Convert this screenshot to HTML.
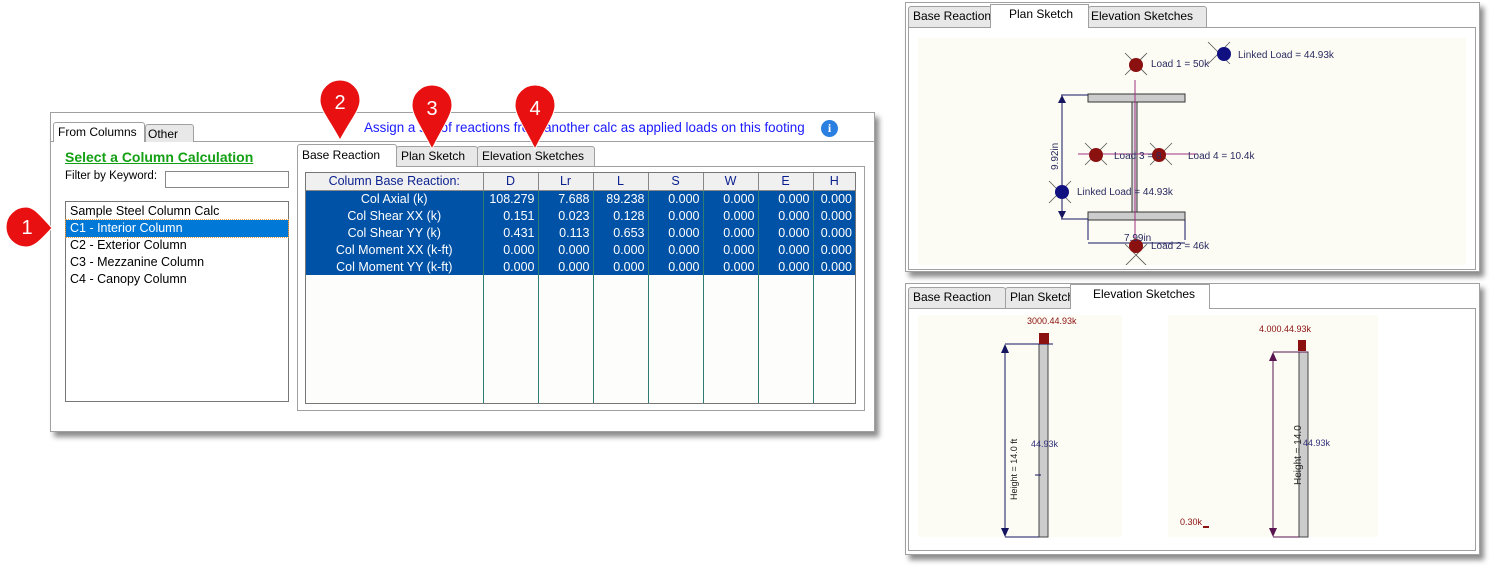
<!DOCTYPE html>
<html><head><meta charset="utf-8"><style>
*{box-sizing:border-box;margin:0;padding:0}
body{width:1495px;height:571px;background:#fff;position:relative;overflow:hidden;font-family:"Liberation Sans","DejaVu Sans",sans-serif;font-size:12px;color:#000}
.a{position:absolute}
.win{border:1px solid #a0a0a0;background:#fff;box-shadow:4px 5px 5px rgba(0,0,0,.45)}
.tab{position:absolute;border:1px solid #a0a0a0;border-bottom:none;background:#e8e8e8;border-radius:3px 3px 0 0;font-size:12px;padding-left:4px;line-height:18px;white-space:nowrap;overflow:hidden}
.tab.on{background:#fff;z-index:2}
table{border-collapse:collapse;font-size:12.5px}
td{height:17px;padding:0 3px;text-align:right;border-left:1px solid #2e7d75;color:#fff;line-height:16px}
th{font-weight:normal;color:#0a1f8f;background:#f0f0f0;height:17px;border-left:1px solid #888;border-bottom:1px solid #888;text-align:center}
td.l{text-align:center;border-left:none}
tr.s td{background:#0052a6}
.lst div{height:17px;line-height:17px;padding-left:4px;font-size:12.5px}
</style></head><body>

<div class="a win" style="left:50px;top:112px;width:825px;height:320px"></div>
<div class="a" style="left:51px;top:141px;width:823px;height:1px;background:#a0a0a0"></div>
<div class="tab" style="left:53px;top:122px;width:92px;height:20px;background:#fff;z-index:2">From Columns</div>
<div class="tab" style="left:145px;top:124px;width:49px;height:18px;padding-left:2px">Other</div>
<div class="a" style="left:364px;top:120px;color:#1a1aff;font-size:13.4px;white-space:nowrap">Assign a set of reactions from another calc as applied loads on this footing</div>
<div class="a" style="left:821px;top:120px;width:17px;height:17px;border-radius:50%;background:#2a7fe0;color:#fff;font-weight:bold;font-size:12px;text-align:center;line-height:17px;font-family:'Liberation Serif',serif">i</div>

<div class="a" style="left:65px;top:149px;color:#14a014;font-weight:bold;font-size:14px;text-decoration:underline">Select a Column Calculation</div>
<div class="a" style="left:65px;top:170px;font-size:11.5px">Filter by Keyword:</div>
<div class="a" style="left:165px;top:171px;width:124px;height:17px;border:1px solid #888"></div>
<div class="a lst" style="left:65px;top:201px;width:224px;height:201px;border:1px solid #777;padding-top:1px">
<div>Sample Steel Column Calc</div>
<div style="background:#0078d7;color:#fff;outline:1px dotted #f0a040">C1 - Interior Column</div>
<div>C2 - Exterior Column</div>
<div>C3 - Mezzanine Column</div>
<div>C4 - Canopy Column</div>
</div>

<div class="a" style="left:297px;top:166px;width:568px;height:245px;border:1px solid #a0a0a0"></div>
<div class="tab on" style="left:297px;top:144px;width:100px;height:23px;padding-top:1px">Base Reaction</div>
<div class="tab" style="left:396px;top:146px;width:82px;height:20px">Plan Sketch</div>
<div class="tab" style="left:477px;top:146px;width:118px;height:20px">Elevation Sketches</div>

<div class="a" style="left:305px;top:172px;width:551px;height:232px;border:1px solid #777;background:#fdfdfb">
<table style="width:549px">
<tr><th style="width:177px;border-left:none">Column Base Reaction:</th><th style="width:55px">D</th><th style="width:55px">Lr</th><th style="width:55px">L</th><th style="width:55px">S</th><th style="width:55px">W</th><th style="width:55px">E</th><th>H</th></tr>
<tr class="s"><td class="l">Col Axial (k)</td><td>108.279</td><td>7.688</td><td>89.238</td><td>0.000</td><td>0.000</td><td>0.000</td><td>0.000</td></tr>
<tr class="s"><td class="l">Col Shear XX (k)</td><td>0.151</td><td>0.023</td><td>0.128</td><td>0.000</td><td>0.000</td><td>0.000</td><td>0.000</td></tr>
<tr class="s"><td class="l">Col Shear YY (k)</td><td>0.431</td><td>0.113</td><td>0.653</td><td>0.000</td><td>0.000</td><td>0.000</td><td>0.000</td></tr>
<tr class="s"><td class="l">Col Moment XX (k-ft)</td><td>0.000</td><td>0.000</td><td>0.000</td><td>0.000</td><td>0.000</td><td>0.000</td><td>0.000</td></tr>
<tr class="s"><td class="l">Col Moment YY (k-ft)</td><td>0.000</td><td>0.000</td><td>0.000</td><td>0.000</td><td>0.000</td><td>0.000</td><td>0.000</td></tr>
</table>
<svg class="a" style="left:0;top:102px" width="549" height="128"><g stroke="#2e7d75"><line x1="177.5" y1="0" x2="177.5" y2="128"/><line x1="232.5" y1="0" x2="232.5" y2="128"/><line x1="287.5" y1="0" x2="287.5" y2="128"/><line x1="342.5" y1="0" x2="342.5" y2="128"/><line x1="397.5" y1="0" x2="397.5" y2="128"/><line x1="452.5" y1="0" x2="452.5" y2="128"/><line x1="507.5" y1="0" x2="507.5" y2="128"/></g></svg>
</div>

<svg class="a" style="left:0;top:0;z-index:5" width="600" height="260">
<g fill="#e81010" stroke="#fff" stroke-width="1">
<path d="M26 207 a20 20 0 1 0 0 40 c8 0 14-6 26-19 c-12-13-18-21-26-21z"/>
<path d="M340 80 a20 20 0 0 1 20 20 c0 10-8 18-20 40 c-12-22-20-30-20-40 a20 20 0 0 1 20-20z"/>
<path d="M432 85 a20 20 0 0 1 20 20 c0 10-8 20-20 44 c-12-24-20-34-20-44 a20 20 0 0 1 20-20z"/>
<path d="M535 85 a20 20 0 0 1 20 20 c0 10-8 20-20 44 c-12-24-20-34-20-44 a20 20 0 0 1 20-20z"/>
</g>
<g fill="#fff" font-size="20" font-family="Liberation Sans" text-anchor="middle"><text x="27" y="234">1</text><text x="340" y="109">2</text><text x="432" y="115">3</text><text x="535" y="115">4</text></g>
</svg>

<div class="a win" style="left:905px;top:2px;width:575px;height:270px"></div>
<div class="a" style="left:908px;top:27px;width:568px;height:243px;border:1px solid #a0a0a0"></div>
<div class="tab" style="left:908px;top:6px;width:84px;height:21px">Base Reaction</div>
<div class="tab on" style="left:990px;top:4px;width:99px;height:24px;border-radius:0;padding-left:18px">Plan Sketch</div>
<div class="tab" style="left:1088px;top:6px;width:119px;height:21px;padding-left:2px">Elevation Sketches</div>
<div class="a" style="left:918px;top:38px;width:548px;height:227px;background:#fcfcf4"></div>
<svg class="a" style="left:918px;top:38px" width="548" height="227" font-family="Liberation Sans" font-size="10">
<rect x="170" y="56" width="97" height="8" fill="#ccc" stroke="#333"/>
<rect x="170" y="174" width="97" height="8" fill="#ccc" stroke="#333"/>
<rect x="214" y="64" width="5" height="110" fill="#ddd" stroke="#333"/>
<line x1="217" y1="42" x2="217" y2="215" stroke="#a03080"/>
<g stroke="#141460" fill="none"><path d="M143 57h27M143 181h27M144 60v118M170 182v20M267 182v20M170 205h97"/></g>
<g fill="#141460"><path d="M144 57l-4 8h8z"/><path d="M144 181l-4-8h8z"/></g>
<line x1="160" y1="116" x2="280" y2="116" stroke="#a03080"/>
<g stroke="#555" stroke-width=".8"><path d="M207 15l22 22M229 15l-22 22M290 4l22 22M312 4l-22 22M167 105l22 22M189 105l-22 22M232 105l22 22M254 105l-22 22M131 143l22 22M153 143l-22 22M207 206l22 22M229 206l-22 22"/></g>
<g fill="#8b1010"><circle cx="218" cy="27" r="7"/><circle cx="178" cy="117" r="7"/><circle cx="241" cy="117" r="7"/><circle cx="218" cy="208" r="7"/></g>
<g fill="#101080"><circle cx="306" cy="16" r="7"/><circle cx="144" cy="154" r="7"/></g>
<g fill="#2a2a60"><text x="233" y="29">Load 1 = 50k</text><text x="320" y="20">Linked Load = 44.93k</text><text x="196" y="121">Load 3 = 8</text><text x="270" y="121">Load 4 = 10.4k</text><text x="159" y="157">Linked Load = 44.93k</text><text x="206" y="203">7.99in</text><text x="233" y="211">Load 2 = 46k</text>
<text transform="translate(140 132) rotate(-90)">9.92in</text></g>
</svg>

<div class="a win" style="left:905px;top:283px;width:575px;height:272px"></div>
<div class="a" style="left:908px;top:308px;width:568px;height:243px;border:1px solid #a0a0a0"></div>
<div class="tab" style="left:908px;top:287px;width:98px;height:21px">Base Reaction</div>
<div class="tab" style="left:1005px;top:287px;width:70px;height:21px">Plan Sketch</div>
<div class="tab on" style="left:1070px;top:284px;width:140px;height:25px;border-radius:0;padding-left:22px">Elevation Sketches</div>
<div class="a" style="left:918px;top:315px;width:204px;height:222px;background:#fcfcf4"></div>
<div class="a" style="left:1168px;top:315px;width:210px;height:222px;background:#fcfcf4"></div>
<svg class="a" style="left:918px;top:315px" width="470" height="225" font-family="Liberation Sans" font-size="9">
<rect x="121" y="29" width="9" height="193" fill="#ccc" stroke="#444"/>
<g stroke="#141460" fill="none"><path d="M87 29h48M87 222h34M87 33v186M117 160h6"/></g>
<g fill="#141460"><path d="M87 29l-4 9h8z"/><path d="M87 222l-4-9h8z"/></g>
<text transform="translate(99 185) rotate(-90)" fill="#222">Height = 14.0 ft</text>
<text x="109" y="9" fill="#8b1010">3000.44.93k</text><text x="113" y="132" fill="#30307a">44.93k</text>
<g fill="#8b1010"><path d="M121 18h10v11h-10z"/></g>
<rect x="381" y="37" width="9" height="185" fill="#ccc" stroke="#444"/>
<g stroke="#5a1450" fill="none"><path d="M385 37h-2M355 37h35M355 222h26M355 41v178"/></g>
<g fill="#5a1450"><path d="M355 37l-4 9h8z"/><path d="M355 222l-4-9h8z"/></g>
<text transform="translate(383 170) rotate(-90)" fill="#222" font-size="10">Height = 14.0</text>
<text x="341" y="17" fill="#8b1010">4.000.44.93k</text><text x="385" y="131" fill="#30307a">44.93k</text>
<g fill="#8b1010"><path d="M380 25h8v11h-8z"/></g>
<text x="262" y="210" fill="#8b1010">0.30k</text><path d="M285 212h6" stroke="#8b1010" stroke-width="2"/>
</svg>
</body></html>
